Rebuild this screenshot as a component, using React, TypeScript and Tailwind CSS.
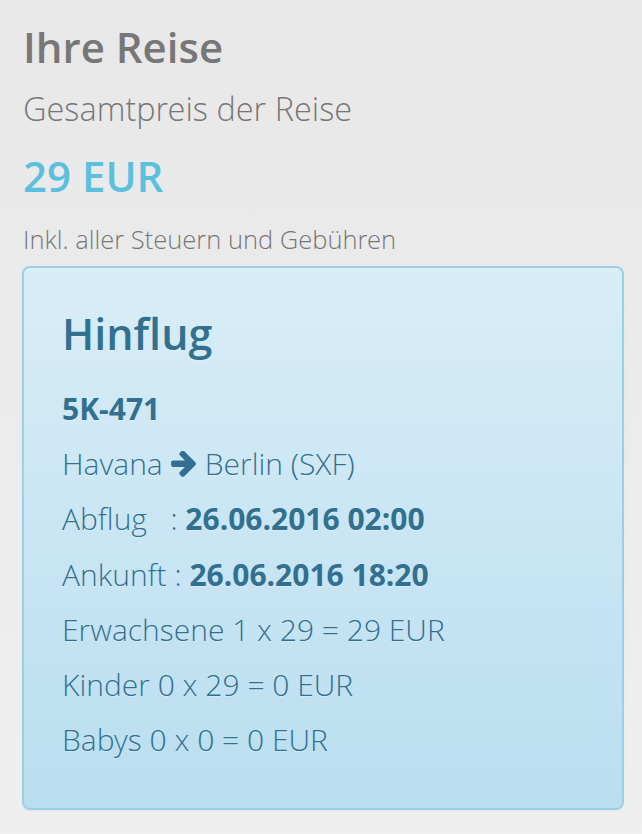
import React from 'react';

const lines = [
  'Erwachsene 1 x 29 = 29 EUR',
  'Kinder 0 x 29 = 0 EUR',
  'Babys 0 x 0 = 0 EUR',
];

const light = "font-['Open_Sans_Light','Open_Sans',sans-serif] font-light";

// chunky arrow, like the old font-awesome arrow-right
const Arrow = () => (
  <svg viewBox="128 210 1472 1540" className="ml-[7px] mr-[8px] h-[26px] w-[27px]" fill="currentColor">
    <path d="M1600 960q0 54-37 91l-651 651q-39 37-91 37-51 0-90-37l-75-75q-38-38-38-91t38-91l293-293h-704q-52 0-84.5-37.5t-32.5-90.5v-128q0-53 32.5-90.5t84.5-37.5h704l-293-294q-38-36-38-90t38-90l75-75q38-38 90-38 53 0 91 38l651 651q37 35 37 90z" />
  </svg>
);

const App: React.FC = () => {
  return (
    <div className="min-h-[834px] w-full bg-gradient-to-b from-[#e8e8e8] to-[#efefef] font-['Open_Sans',sans-serif]">
      <div className="px-[23px] pt-[22px] pb-[26px]">
        <h1 className="text-[42px] font-semibold leading-[50px] text-[#777]">Ihre Reise</h1>
        <h2 className={`mt-[17px] text-[32.5px] leading-[40px] text-[#777] ${light}`}>Gesamtpreis der Reise</h2>
        <div className="mt-[22px] text-[42px] font-semibold leading-[50px] text-[#5bc0de]">29 EUR</div>
        <p className={`mt-[21px] text-[25.5px] leading-[34px] text-[#777] ${light}`}>Inkl. aller Steuern und Gebühren</p>

        <div className="mt-[10px] -ml-px w-[602px] rounded-[8px] border-2 border-[#9acfea] bg-gradient-to-b from-[#d9edf7] to-[#b9def0] px-[38px] pt-[41px] pb-[48px] text-[#31708f] shadow-[inset_0_1px_0_rgba(255,255,255,0.25),0_1px_2px_rgba(0,0,0,0.05)] [text-shadow:0_1px_0_rgba(255,255,255,0.3)]">
          <h3 className="text-[43px] font-semibold leading-[50px]">Hinflug</h3>
          <div className="mt-[30px] text-[30px] font-bold leading-[40px]">5K-471</div>
          <div className={`mt-[15px] flex items-center text-[30px] leading-[40px] ${light}`}>
            Havana
            <Arrow />
            Berlin (SXF)
          </div>
          <div className={`mt-[15.3px] text-[30px] leading-[40px] ${light}`}>
            Abflug&nbsp;&nbsp; : <span className="font-['Open_Sans',sans-serif] font-bold">26.06.2016 02:00</span>
          </div>
          <div className={`mt-[15.3px] text-[30px] leading-[40px] ${light}`}>
            Ankunft : <span className="font-['Open_Sans',sans-serif] font-bold">26.06.2016 18:20</span>
          </div>
          {lines.map((l) => (
            <div key={l} className={`mt-[15.3px] text-[30px] leading-[40px] ${light}`}>
              {l}
            </div>
          ))}
        </div>
      </div>
    </div>
  );
};

export default App;
